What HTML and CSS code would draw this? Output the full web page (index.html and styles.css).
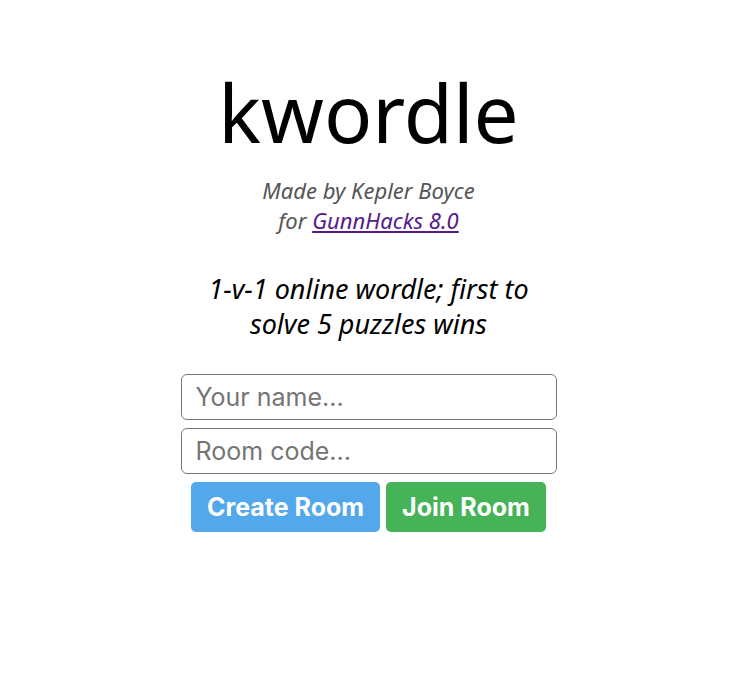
FILE: index.html
```html
<!DOCTYPE html>
<html lang="en">

<head>
    <meta charset="UTF-8">
    <meta name="viewport" content="width=device-width, initial-scale=1.0">
    <title>kwordle</title>
    <link rel="stylesheet" href="styles.css">
</head>

<body>
    <div class="main">

        <!-- ----------- header ---------------- -->

        <h1 class="title">kwordle</h1>
        <p class="credit">
            Made by Kepler Boyce<br>
            for <a href="#">GunnHacks 8.0</a>
        </p>

        <p class="tagline">1-v-1 online wordle; first to<br>solve 5 puzzles wins</p>

        <!-- ----------- join form ---------------- -->

        <div class="form">
            <input type="text" id="name" placeholder="Your name...">
            <input type="text" id="code" placeholder="Room code...">

            <div class="buttons">
                <button class="btn btn-create">Create Room</button>
                <button class="btn btn-join">Join Room</button>
            </div>
        </div>

    </div>
</body>

</html>
```

FILE: styles.css
```css
* {
    box-sizing: border-box;
    padding: 0;
    margin: 0;
}

body {
    font-family: "Noto Sans", "Open Sans", sans-serif;
    background: #fff;
    color: #000;
}

.main {
    width: 737px;
    display: flex;
    flex-direction: column;
    align-items: center;
    text-align: center;
}

.title {
    font-weight: 400;
    font-size: 80px;
    line-height: 1;
    margin-top: 72px;
}

.credit {
    font-style: italic;
    font-size: 22px;
    line-height: 30px;
    color: #555;
    margin-top: 23px;
}

.credit a {
    color: #551a8b;
}

.tagline {
    font-style: italic;
    font-size: 27px;
    line-height: 35px;
    margin-top: 36px;
}

.form {
    width: 376px;
    margin-top: 33px;
    display: flex;
    flex-direction: column;
    align-items: center;
    gap: 8px;
}

.form input {
    width: 100%;
    height: 46px;
    padding: 0 14px;
    border: 1px solid #767676;
    border-radius: 6px;
    font-family: Inter, sans-serif;
    font-size: 25px;
}

.form input::placeholder {
    color: #757575;
}

.buttons {
    display: flex;
    gap: 6px;
}

.btn {
    height: 50px;
    padding: 0 16px;
    border: none;
    border-radius: 5px;
    color: #fff;
    font-family: Inter, sans-serif;
    font-weight: 700;
    font-size: 25px;
}

.btn-create {
    background: #52a8ea;
}

.btn-join {
    background: #46b358;
}
```
